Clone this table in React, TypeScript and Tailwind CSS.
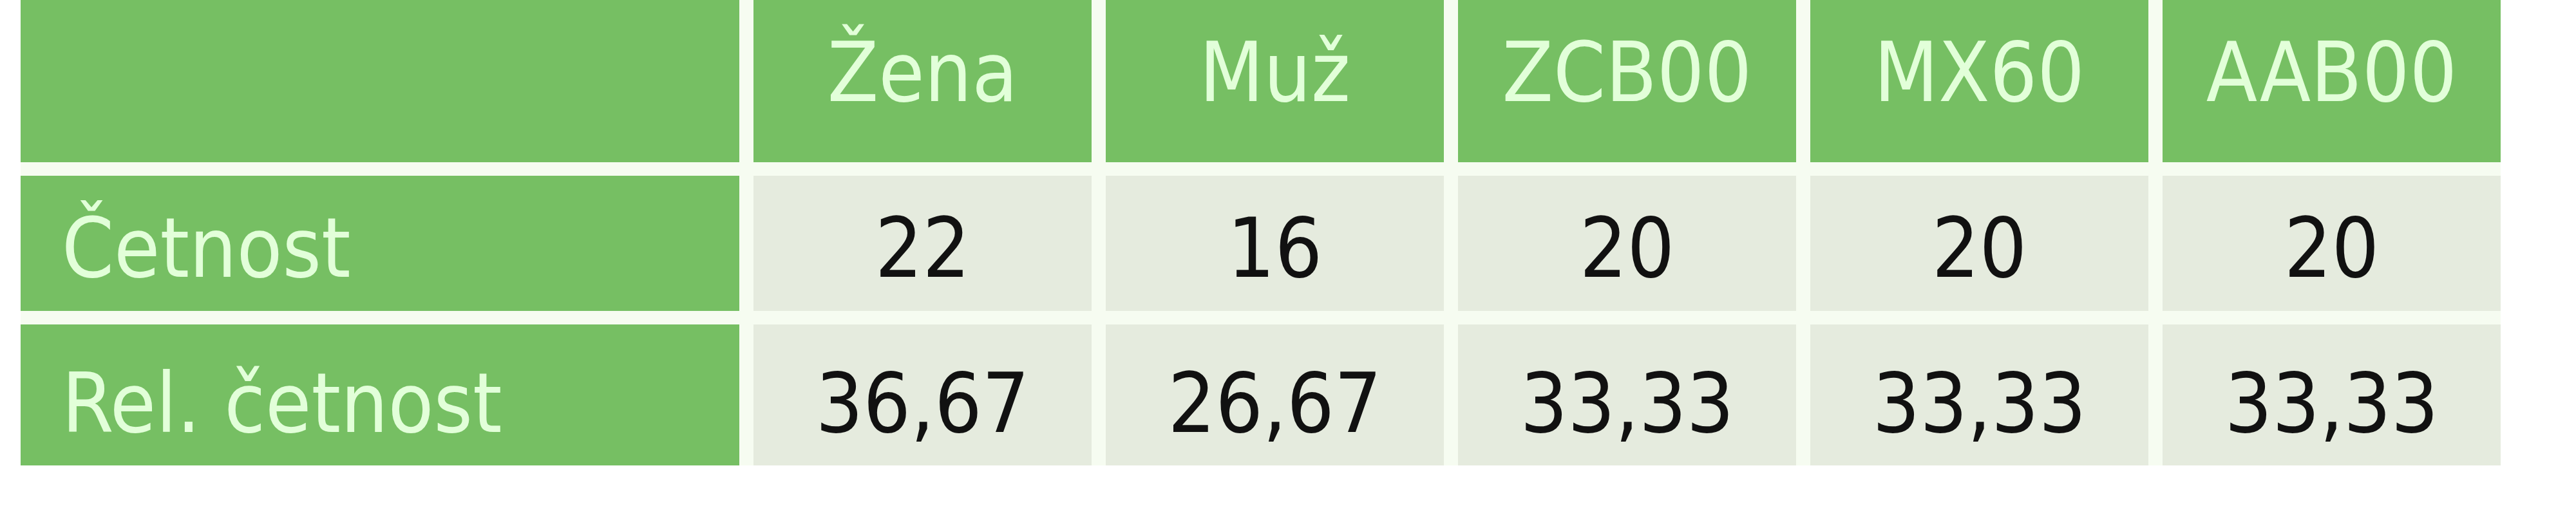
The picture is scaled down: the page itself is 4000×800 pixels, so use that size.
const headers = ['Žena', 'Muž', 'ZCB00', 'MX60', 'AAB00'];

const rows = [
  { label: 'Četnost', values: ['22', '16', '20', '20', '20'], height: 'h-[210px]', pad: 'pt-[48px]' },
  { label: 'Rel. četnost', values: ['36,67', '26,67', '33,33', '33,33', '33,33'], height: 'h-[219px]', pad: 'pt-[58px]' },
];

export default function App() {
  return (
    <div className="h-[800px] w-[4000px] bg-white">
      <div className="ml-[32px] inline-grid grid-cols-[1116px_repeat(5,525px)] gap-x-[22px] gap-y-[21px] bg-[#f6fcf1] font-['DejaVu_Sans_Condensed','DejaVu_Sans',sans-serif] font-stretch-condensed text-[129px] leading-none">
        <div className="h-[252px] bg-[#76bf63]" />
        {headers.map((h) => (
          <div key={h} className="h-[252px] bg-[#76bf63] pt-[48px] text-center text-[#e2ffd9]">
            {h}
          </div>
        ))}
        {rows.map((row) => (
          <>
            <div key={row.label} className={`${row.height} ${row.pad} bg-[#76bf63] pl-[64px] text-[#e2ffd9]`}>
              {row.label}
            </div>
            {row.values.map((v, i) => (
              <div key={row.label + i} className={`${row.height} ${row.pad} bg-[#e5ebde] text-center text-[#111]`}>
                {v}
              </div>
            ))}
          </>
        ))}
      </div>
    </div>
  );
}
